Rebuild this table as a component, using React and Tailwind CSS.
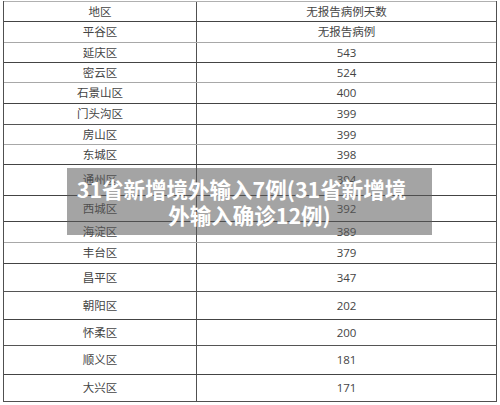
const rows = [
  { name: "地区", value: "无报告病例天数", h: 20, line: "border-[#b0b0b0]" },
  { name: "平谷区", value: "无报告病例", h: 21, line: "border-[#444]" },
  { name: "延庆区", value: "543", h: 20, line: "border-[#a8a8a8]" },
  { name: "密云区", value: "524", h: 20, line: "border-[#444]" },
  { name: "石景山区", value: "400", h: 21, line: "border-[#a8a8a8]" },
  { name: "门头沟区", value: "399", h: 21, line: "border-[#444]" },
  { name: "房山区", value: "399", h: 20, line: "border-[#555]" },
  { name: "东城区", value: "398", h: 20, line: "border-[#a8a8a8]" },
  { name: "通州区", value: "394", h: 31, line: "border-[#444]" },
  { name: "西城区", value: "392", h: 26, line: "border-[#444]" },
  { name: "海淀区", value: "389", h: 21, line: "border-[#444]" },
  { name: "丰台区", value: "379", h: 21, line: "border-[#a8a8a8]" },
  { name: "昌平区", value: "347", h: 28, line: "border-[#444]" },
  { name: "朝阳区", value: "202", h: 28, line: "border-[#555]" },
  { name: "怀柔区", value: "200", h: 26, line: "border-[#444]" },
  { name: "顺义区", value: "181", h: 29, line: "border-[#555]" },
  { name: "大兴区", value: "171", h: 27, line: "border-[#444]" },
];

export default function App() {
  return (
    <div className="w-[500px] h-[405px] bg-white overflow-hidden pt-px">
      <div
        className="relative mx-[3px] w-[494px] border-x border-b border-[#505050] text-[11.5px] text-[#444]"
        style={{ fontFamily: '"Open Sans", "Noto Sans CJK SC", sans-serif' }}
      >
        {rows.map((r, i) => (
          <div key={i} className={`flex border-t ${r.line}`} style={{ height: r.h }}>
            <div className="w-[193px] border-r border-[#505050] flex items-center justify-center">{r.name}</div>
            <div className="flex-1 flex items-center justify-center">{r.value}</div>
          </div>
        ))}
        <div
          className="absolute left-[63px] top-[167px] w-[365px] h-[67px] bg-[rgba(90,90,90,0.55)] flex flex-col items-center justify-center text-center text-white font-bold text-[21.5px] leading-[26px] whitespace-nowrap"
          style={{ fontFamily: '"Noto Sans CJK SC", sans-serif' }}
        >
          <span className="-ml-4">31省新增境外输入7例(31省新增境</span>
          <span>外输入确诊12例)</span>
        </div>
      </div>
    </div>
  );
}
